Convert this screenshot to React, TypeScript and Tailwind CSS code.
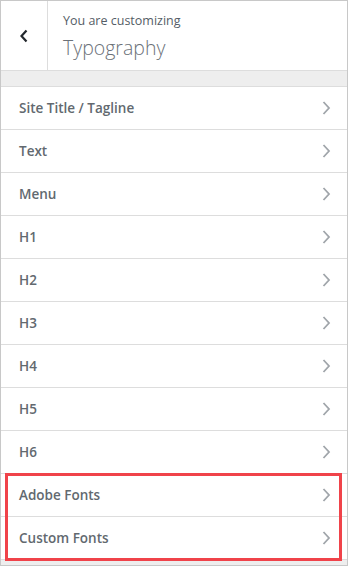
import React from 'react';

const items = [
    'Site Title / Tagline',
    'Text',
    'Menu',
    'H1',
    'H2',
    'H3',
    'H4',
    'H5',
    'H6',
    'Adobe Fonts',
    'Custom Fonts',
];

const Chevron: React.FC<{ color: string }> = ({ color }) => (
    <svg width="10" height="16" viewBox="0 0 10 16">
        <path d="M2.5 2 L8 8 L2.5 14" fill="none" stroke={color} strokeWidth="1.8" />
    </svg>
);

export default function App() {
    return (
        <div className="w-[349px] h-[567px] bg-white overflow-hidden font-['Open_Sans','Noto_Sans',sans-serif]">
            <div className="relative w-[348px] h-[566px] border border-[#c8c8c8] bg-[#eeeeee]">
                {/* Header */}
                <div className="flex h-[70px] bg-white border-b border-[#dddddd]">
                    <div className="w-[47px] flex items-center justify-center border-r border-[#dddddd]">
                        <svg width="10" height="14" viewBox="0 0 10 14">
                            <path d="M7.5 1.5 L2.5 7 L7.5 12.5" fill="none" stroke="#23282d" strokeWidth="2.2" />
                        </svg>
                    </div>
                    <div className="pl-[15px] pt-[10px]">
                        <div className="text-[12.5px] leading-[20px] text-[#555d66]">You are customizing</div>
                        <div className="text-[19.5px] leading-[28px] font-light text-[#6b7178] mt-[3px]">Typography</div>
                    </div>
                </div>

                {/* Spacer band */}
                <div className="h-[16px] bg-[#eeeeee] border-b border-[#dddddd]" />

                {/* Sections */}
                <ul>
                    {items.map((label) => (
                        <li
                            key={label}
                            className="h-[43px] bg-white border-b border-[#dddddd] flex items-center justify-between pl-[18px] pr-[16px]"
                        >
                            <span className="text-[13.5px] font-semibold text-[#62696f]">{label}</span>
                            <Chevron color="#a0a5aa" />
                        </li>
                    ))}
                </ul>

                {/* Highlight */}
                <div className="absolute left-[4px] top-[472px] w-[337px] h-[88px] border-[3px] border-[#f0434a]" />
            </div>
        </div>
    );
}
